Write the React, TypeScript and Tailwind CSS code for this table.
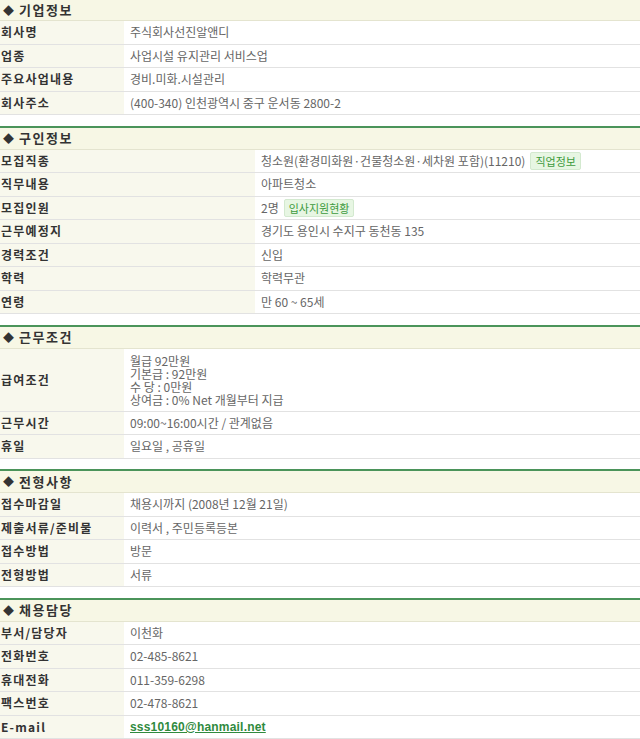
import type { ReactNode } from "react";

type Row = { label: string; value: ReactNode; tall?: boolean };

const Badge = ({ children }: { children: ReactNode }) => (
  <span className="ml-[5px] inline-flex h-[18px] items-center rounded-[2px] border border-[#d3e9cf] bg-[#e7f6e3] px-[4px] text-[11px] text-[#3d9a3d]">
    {children}
  </span>
);

const company: Row[] = [
  { label: "회사명", value: "주식회사선진알앤디" },
  { label: "업종", value: "사업시설 유지관리 서비스업" },
  { label: "주요사업내용", value: "경비.미화.시설관리" },
  { label: "회사주소", value: "(400-340) 인천광역시 중구 운서동 2800-2" },
];

const recruit: Row[] = [
  {
    label: "모집직종",
    value: (
      <>
        청소원(환경미화원·건물청소원·세차원 포함)(11210)
        <Badge>직업정보</Badge>
      </>
    ),
  },
  { label: "직무내용", value: "아파트청소" },
  {
    label: "모집인원",
    value: (
      <>
        2명
        <Badge>입사지원현황</Badge>
      </>
    ),
  },
  { label: "근무예정지", value: "경기도 용인시 수지구 동천동 135" },
  { label: "경력조건", value: "신입" },
  { label: "학력", value: "학력무관" },
  { label: "연령", value: "만 60 ~ 65세" },
];

const conditions: Row[] = [
  {
    label: "급여조건",
    tall: true,
    value: (
      <div className="leading-[13px]">
        <div>월급 92만원</div>
        <div>기본급 : 92만원</div>
        <div>수 당 : 0만원</div>
        <div>상여금 : 0% Net 개월부터 지급</div>
      </div>
    ),
  },
  { label: "근무시간", value: "09:00~16:00시간 / 관계없음" },
  { label: "휴일", value: "일요일 , 공휴일" },
];

const process: Row[] = [
  { label: "접수마감일", value: "채용시까지 (2008년 12월 21일)" },
  { label: "제출서류/준비물", value: "이력서 , 주민등록등본" },
  { label: "접수방법", value: "방문" },
  { label: "전형방법", value: "서류" },
];

const contact: Row[] = [
  { label: "부서/담당자", value: "이천화" },
  { label: "전화번호", value: "02-485-8621" },
  { label: "휴대전화", value: "011-359-6298" },
  { label: "팩스번호", value: "02-478-8621" },
  {
    label: "E-mail",
    value: (
      <a
        href="#"
        className="font-['Liberation_Sans',sans-serif] text-[12px] font-bold tracking-[0.2px] text-[#2f8a3e] underline"
      >
        sss10160@hanmail.net
      </a>
    ),
  },
];

const Section = ({
  title,
  rows,
  labelWidth,
  first,
}: {
  title: string;
  rows: Row[];
  labelWidth: "narrow" | "wide";
  first?: boolean;
}) => {
  return (
    <section className={first ? "" : "border-t-2 border-[#4b945a]"}>
      {/* header bar */}
      <div
        className={`flex items-center border-b border-[#e4e4cf] bg-[#f7f7e5] pl-[3px] text-[13px] font-bold text-[#333] ${
          first ? "h-[21px]" : "h-[22px]"
        }`}
      >
        <span className="mr-[5px] text-[11px]">◆</span>
        <span className="tracking-[1.5px]">{title}</span>
      </div>

      {rows.map((row) => (
        <div
          key={row.label}
          className={`flex border-b border-[#e2e2e2] ${row.tall ? "h-[63px]" : "h-[23.5px]"}`}
        >
          <div
            className={`flex shrink-0 items-center bg-[#f8f8ed] pl-[1px] text-[12px] font-bold tracking-[1.2px] text-[#333] ${
              labelWidth === "wide" ? "w-[255px]" : "w-[124px]"
            }`}
          >
            {row.label}
          </div>
          <div className="flex flex-1 items-center pl-[6px] text-[12px] text-[#666]">{row.value}</div>
        </div>
      ))}

      <div className="h-[10.5px]" />
    </section>
  );
};

export default function App() {
  return (
    <div className="w-[640px] overflow-hidden bg-white font-['Noto_Sans_CJK_KR',sans-serif]">
      <Section first title="기업정보" rows={company} labelWidth="narrow" />
      <Section title="구인정보" rows={recruit} labelWidth="wide" />
      <Section title="근무조건" rows={conditions} labelWidth="narrow" />
      <Section title="전형사항" rows={process} labelWidth="narrow" />
      <Section title="채용담당" rows={contact} labelWidth="narrow" />
    </div>
  );
}
